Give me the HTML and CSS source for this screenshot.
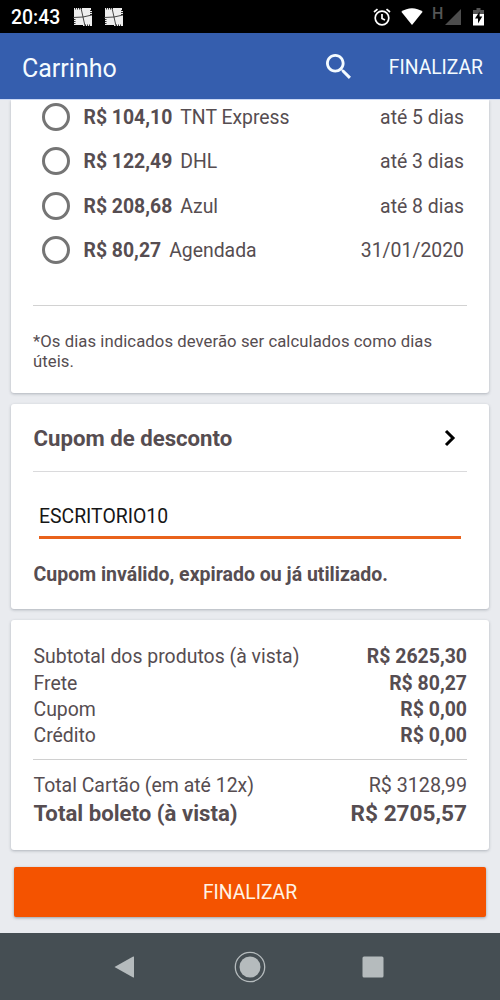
FILE: index.html
```html
<!DOCTYPE html>
<html lang="pt-BR">
<head>
<meta charset="utf-8">
<title>Carrinho</title>
<link rel="stylesheet" href="styles.css">
</head>
<body>
<div class="screen">
  <div class="status">
    <span class="clock">20:43</span>
    <svg class="pinwheel" viewBox="0 0 20 20"><path class="pw-fill" d="M1 1H18V4H19V19H10V18H1V10H1z"/><path class="pw-line" d="M8 1L12 19M0 10.500L10 10L19 8"/><path class="pw-teeth" d="M2.500 0V2.500M4.500 0V2.500M6.500 0V2.500M8.500 0V2M12.500 17.500V20M14.500 17.500V20M16.500 17.500V20M0 12.500H2.500M0 14.500H2.500M0 16.500H2.500M17 3.500H20M17 5.500H20M17 7.500H20"/></svg>
    <svg class="pinwheel" viewBox="0 0 20 20"><path class="pw-fill" d="M1 1H18V4H19V19H10V18H1V10H1z"/><path class="pw-line" d="M8 1L12 19M0 10.500L10 10L19 8"/><path class="pw-teeth" d="M2.500 0V2.500M4.500 0V2.500M6.500 0V2.500M8.500 0V2M12.500 17.500V20M14.500 17.500V20M16.500 17.500V20M0 12.500H2.500M0 14.500H2.500M0 16.500H2.500M17 3.500H20M17 5.500H20M17 7.500H20"/></svg>
    <div class="system">
      <svg class="alarm" viewBox="0 0 18 18"><circle cx="9" cy="10" r="6.8"/><path d="M9 6V10.4L12 12M1 4L4.5 1.1M13.5 1.1L17 4"/></svg>
      <svg class="wifi" viewBox="0 0 22 17"><path d="M.3 3.8C6.5-1 15.500-1 21.700 3.800L11 17z"/></svg>
      <span class="network">H</span>
      <svg class="signal" viewBox="0 0 16 16"><path d="M16 0V16H0z"/></svg>
      <svg class="battery" viewBox="0 0 11 18"><path class="bat-top" d="M3.500 0H7.500V2H11V7H0V2H3.500z"/><path class="bat-fill" d="M0 6H11V17.500H0z"/><path class="bolt" d="M6.600 3.500L2 10.500H5V15.500L9.300 8.500H6.600z"/></svg>
    </div>
  </div>
  <header class="appbar">
    <h1 class="title">Carrinho</h1>
    <svg class="search" viewBox="3 3 17.500 17.500"><path d="M15.500 14h-.79l-.28-.27C15.410 12.590 16 11.110 16 9.500 16 5.910 13.090 3 9.500 3S3 5.910 3 9.500 5.910 16 9.500 16c1.610 0 3.090-.59 4.230-1.570l.27.28v.79l5 4.990L20.490 19l-4.990-5zm-6 0C7.010 14 5 11.990 5 9.500S7.010 5 9.500 5 14 7.010 14 9.500 11.990 14 9.500 14z"/></svg>
    <span class="action">FINALIZAR</span>
  </header>
  <main class="content">
    <section class="card shipping">
      <div class="option"><i class="radio"></i><b class="price">R$ 104,10</b><span>TNT Express</span><span class="term">até 5 dias</span></div>
      <div class="option"><i class="radio"></i><b class="price">R$ 122,49</b><span>DHL</span><span class="term">até 3 dias</span></div>
      <div class="option"><i class="radio"></i><b class="price">R$ 208,68</b><span>Azul</span><span class="term">até 8 dias</span></div>
      <div class="option"><i class="radio"></i><b class="price">R$ 80,27</b><span>Agendada</span><span class="term">31/01/2020</span></div>
      <p class="note">*Os dias indicados deverão ser calculados como dias úteis.</p>
    </section>
    <section class="card coupon">
      <div class="coupon-head"><h2 class="coupon-title">Cupom de desconto</h2><svg class="chevron" viewBox="0 0 12 18"><path d="M2 2L9 9L2 16"/></svg></div>
      <div class="field">ESCRITORIO10</div>
      <p class="error">Cupom inválido, expirado ou já utilizado.</p>
    </section>
    <section class="card summary">
      <div class="line"><span>Subtotal dos produtos (à vista)</span><b>R$ 2625,30</b></div>
      <div class="line"><span>Frete</span><b>R$ 80,27</b></div>
      <div class="line"><span>Cupom</span><b>R$ 0,00</b></div>
      <div class="line"><span>Crédito</span><b>R$ 0,00</b></div>
      <div class="totals">
        <div class="line"><span>Total Cartão (em até 12x)</span><span class="card-value">R$ 3128,99</span></div>
        <div class="line grand"><span>Total boleto (à vista)</span><span class="grand-value">R$ 2705,57</span></div>
      </div>
    </section>
    <div class="submit">FINALIZAR</div>
  </main>
  <nav class="navbar">
    <svg class="nav-icon" viewBox="0 0 32 32"><path d="M6.500 16L25.200 5.500Q26 5.100 26 6V26Q26 26.900 25.200 26.500z"/></svg>
    <svg class="nav-icon" viewBox="0 0 32 32"><circle cx="16" cy="16" r="10.500"/><circle class="ring" cx="16" cy="16" r="14.700"/></svg>
    <svg class="nav-icon" viewBox="0 0 32 32"><rect x="5.500" y="5.500" width="21" height="21" rx="1.500"/></svg>
  </nav>
</div>
</body>
</html>
```
FILE: styles.css
```css
* { box-sizing: border-box; }
body { margin: 0; background: #e9ebef; color: #564d51; font-family: Roboto, sans-serif; font-size: 19.4px; }
h1, h2, p { margin: 0; }
svg { display: block; flex: none; }
.screen { display: flex; flex-direction: column; width: 500px; height: 1000px; overflow: hidden; }
.status { display: flex; align-items: center; flex: none; height: 33px; padding: 0 16px 0 11px; background: #000; color: #fff; }
.clock { width: 62px; padding-top: 2px; font-size: 19.400px; font-weight: 500; line-height: 33px; }
.pinwheel { width: 20px; height: 20px; margin-right: 10.500px; }
.pw-fill { fill: #eee; }
.pw-line { fill: none; stroke: #333; stroke-width: .9; }
.pw-teeth { stroke: #000; stroke-width: .8; }
.system { display: flex; align-items: center; margin-left: auto; }
.alarm { width: 18px; height: 18px; margin-right: 10.500px; fill: none; stroke: #fff; stroke-width: 1.700; }
.wifi { width: 22px; height: 17px; margin-right: 9px; fill: #fff; }
.network { align-self: flex-start; width: 13px; color: #555; font-size: 16px; font-weight: 500; line-height: 12px; }
.signal { width: 16px; height: 16px; margin-right: 12px; fill: #4d4d4d; }
.battery { width: 11px; height: 18px; }
.bat-top { fill: #555; }
.bat-fill { fill: #fff; }
.bolt { fill: #000; }
.appbar { display: flex; align-items: center; flex: none; height: 67px; padding: 2px 17px 0 22px; border-bottom: 1px solid #ccd9f5; background: #355eae; background-clip: padding-box; color: #f4fbff; }
.title { padding-top: 3px; font-size: 25px; font-weight: 400; line-height: 30px; }
.search { width: 25px; height: 25px; margin: -1px 38px 0 auto; fill: #f4fbff; }
.action { padding-top: 2px; font-size: 19.300px; line-height: 24px; }
.content { display: flex; flex: 1; flex-direction: column; gap: 11px; padding: 0 11px; }
.card { flex: none; padding: 0 22px; border-radius: 3px; background: #fff; box-shadow: 0 1px 3px rgba(40, 50, 65, .3); }
.shipping { height: 293px; border-radius: 0 0 3px 3px; clip-path: inset(0 -6px -6px); }
.option { display: flex; align-items: center; height: 44.400px; padding: 0 3px 0 8px; line-height: 24px; }
.option:first-child { height: 39px; padding-bottom: 5px; }
.option > b, .option > span { padding-top: 1px; }
.option:nth-child(n+3) > b, .option:nth-child(n+3) > span { padding-top: 2px; }
.radio { flex: none; width: 28px; height: 28px; margin: 0 14px 0 .500px; border: 3px solid #757575; border-radius: 50%; }
.price { margin-right: 8px; }
.term { margin-left: auto; }
.note { margin-top: 33px; padding-top: 26px; border-top: 1px solid #d2d2d2; font-size: 16.700px; letter-spacing: .07px; line-height: 19.500px; }
.coupon { height: 205px; }
.coupon-head { display: flex; align-items: center; justify-content: space-between; height: 68px; padding: 0 11px 0 .500px; border-bottom: 1px solid #dadadc; }
.coupon-title { padding-top: 1px; font-size: 22.200px; line-height: 26px; }
.chevron { width: 12px; height: 18px; fill: none; stroke: #000; stroke-width: 3; }
.field { height: 67px; margin: 0 6px; padding-top: 33px; border-bottom: 3px solid #e9621b; color: #161616; font-size: 19.400px; line-height: 24px; }
.error { margin-top: 24px; padding-left: .500px; font-size: 19.500px; font-weight: 700; line-height: 24px; }
.summary { height: 230px; padding-top: 24.400px; }
.line { display: flex; justify-content: space-between; height: 26.300px; padding-left: .500px; font-size: 19.450px; line-height: 26.300px; }
.card-value { font-size: 19.700px; }
.totals { margin-top: 9.600px; padding-top: 13px; border-top: 1px solid #d0d0d0; }
.grand { height: 29px; font-size: 22.200px; font-weight: 700; line-height: 29px; }
.grand-value { font-size: 22.600px; }
.submit { height: 50px; margin: 6px 3px 0; border-radius: 2px; background: #f45300; box-shadow: 0 1px 3px rgba(40, 50, 65, .4); color: #fff3e6; font-size: 19.300px; line-height: 52px; text-align: center; }
.navbar { display: flex; align-items: center; justify-content: space-between; flex: none; height: 67px; padding: 0 111px 0 108px; background: #454e53; }
.nav-icon { width: 32px; height: 32px; fill: #b5bbbd; }
.nav-icon:nth-child(2) { margin-left: 2px; }
.ring { fill: none; stroke: #b5bbbd; stroke-width: 1.300; }
```
